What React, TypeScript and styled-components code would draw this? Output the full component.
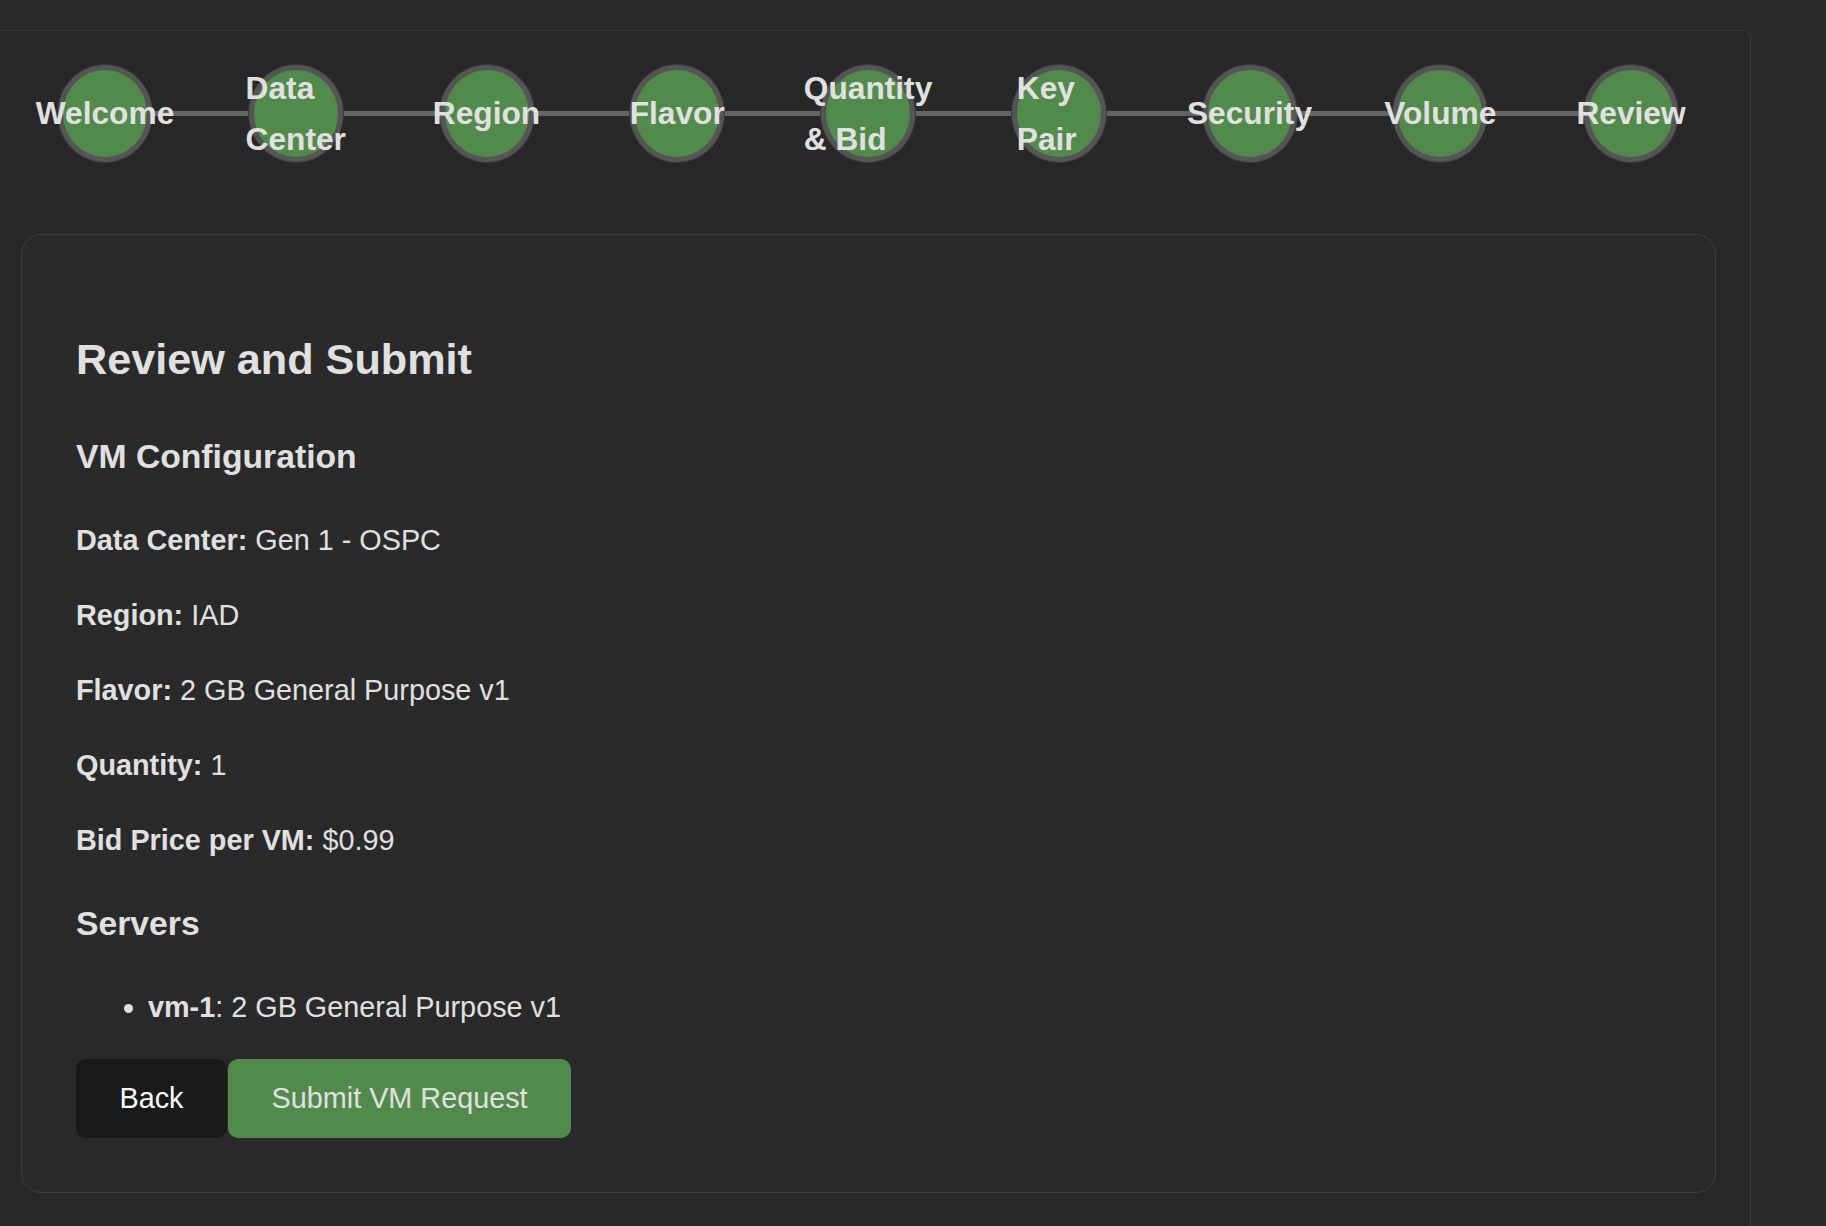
import styled, { createGlobalStyle } from "styled-components"

const GlobalStyle = createGlobalStyle`
  html, body {
    margin: 0;
    overflow: hidden;
    background: #2a2a2a;
  }
  body {
    font-family: "Liberation Sans", Arial, sans-serif;
    font-size: 28.8px;
    line-height: 1.6;
    color: #e0e0e0;
  }
`

const Page = styled.div`
  padding-top: 30px;
`

const Wizard = styled.div`
  box-sizing: border-box;
  width: 1765px;
  margin-left: -14px;
  padding: 0 34px 40px;
  background: #282828;
  border: 1px solid #3a3a3a;
  border-radius: 8px;
`

const Stepper = styled.div`
  display: flex;
  align-items: center;
  margin: 34px 0 72px;
  padding: 0 38px 0 37px;
`

const Step = styled.div`
  position: relative;
  z-index: 1;
  flex: none;
  display: flex;
  align-items: center;
  justify-content: center;
  width: 84px;
  height: 87px;
  border: 5px solid #555555;
  border-radius: 50%;
  background: #528a4b;
  box-shadow: 0 0 0 1px #3a3a3a;
`

const StepLabel = styled.span`
  font-size: 31.7px;
  font-weight: bold;
  line-height: 1.6;
  color: #e0e0e0;
  text-align: left;
`

const Connector = styled.div`
  flex: 1;
  height: 5px;
  background: #646464;
`

const Card = styled.section`
  padding: 54px;
  background: #2a2a2a;
  border: 1px solid #3e3e3e;
  border-radius: 20px;
`

const Title = styled.h2`
  margin: 0.83em 0;
  font-size: 43.2px;
  line-height: 1.6;
`

const Section = styled.h3`
  margin: 1em 0;
  font-size: 33.7px;
  line-height: 1.6;
`

const Field = styled.p`
  margin: 1em 0;
`

const ServerList = styled.ul`
  margin: 1em 0;
  padding-left: 72px;
`

const Actions = styled.div`
  display: flex;
  gap: 1px;
`

const Button = styled.button<{ $primary?: boolean }>`
  font-family: inherit;
  font-size: 28.8px;
  line-height: normal;
  padding: 23px 43.5px;
  border: none;
  border-radius: 10px;
  cursor: pointer;
  background: ${(p) => (p.$primary ? "#528a4b" : "#1a1a1a")};
  color: ${(p) => (p.$primary ? "#e0e0e0" : "#ffffff")};
`

const steps = ["Welcome", "Data Center", "Region", "Flavor", "Quantity & Bid", "Key Pair", "Security", "Volume", "Review"]

const fields = [
  ["Data Center:", "Gen 1 - OSPC"],
  ["Region:", "IAD"],
  ["Flavor:", "2 GB General Purpose v1"],
  ["Quantity:", "1"],
  ["Bid Price per VM:", "$0.99"],
]

export default function App() {
  return (
    <Page>
      <GlobalStyle />
      <Wizard>
        <Stepper>
          {steps.map((s, i) => (
            <>
              {i > 0 && <Connector key={"c" + i} />}
              <Step key={s}>
                <StepLabel>{s}</StepLabel>
              </Step>
            </>
          ))}
        </Stepper>
        <Card>
          <Title>Review and Submit</Title>
          <Section>VM Configuration</Section>
          {fields.map(([k, v]) => (
            <Field key={k}>
              <strong>{k}</strong> {v}
            </Field>
          ))}
          <Section>Servers</Section>
          <ServerList>
            <li>
              <strong>vm-1</strong>: 2 GB General Purpose v1
            </li>
          </ServerList>
          <Actions>
            <Button>Back</Button>
            <Button $primary>Submit VM Request</Button>
          </Actions>
        </Card>
      </Wizard>
    </Page>
  )
}
